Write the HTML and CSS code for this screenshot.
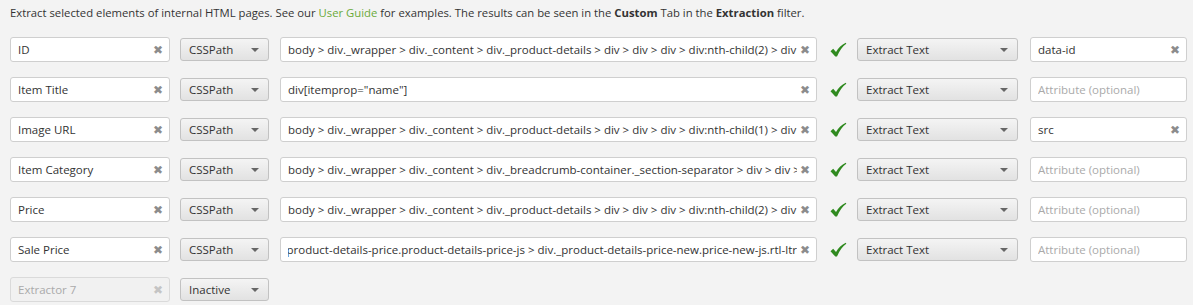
FILE: index.html
```html
<!DOCTYPE html>
<html>
<head>
<meta charset="utf-8">
<link rel="stylesheet" href="styles.css">
</head>
<body>
<div class="page">
  <p class="intro">Extract selected elements of internal HTML pages. See our <a class="link">User Guide</a> for examples. The results can be seen in the <b>Custom</b> Tab in the <b>Extraction</b> filter.</p>
  <div class="rows">
    <div class="row">
      <div class="field name"><span class="val">ID</span><span class="clear">✖</span></div>
      <div class="select type"><span>CSSPath</span><span class="caret"></span></div>
      <div class="field path"><span class="val">body &gt; div._wrapper &gt; div._content &gt; div._product-details &gt; div &gt; div &gt; div &gt; div:nth-child(2) &gt; div</span><span class="clear">✖</span></div>
      <div class="check"><svg width="18" height="16" viewBox="0 0 18 16"><path d="M1.5 9.2 L4.2 6.8 L7 10 C9.5 6 12.5 2.8 16.8 0.8 L17.3 1.8 C13.4 4.6 10.5 8.7 8 14.6 L6.3 14.6 Z" fill="#2f8a1f"/></svg></div>
      <div class="select action"><span>Extract Text</span><span class="caret"></span></div>
      <div class="field attr"><span class="val">data-id</span><span class="clear">✖</span></div>
    </div>
    <div class="row">
      <div class="field name"><span class="val">Item Title</span><span class="clear">✖</span></div>
      <div class="select type"><span>CSSPath</span><span class="caret"></span></div>
      <div class="field path"><span class="val">div[itemprop="name"]</span><span class="clear">✖</span></div>
      <div class="check"><svg width="18" height="16" viewBox="0 0 18 16"><path d="M1.5 9.2 L4.2 6.8 L7 10 C9.5 6 12.5 2.8 16.8 0.8 L17.3 1.8 C13.4 4.6 10.5 8.7 8 14.6 L6.3 14.6 Z" fill="#2f8a1f"/></svg></div>
      <div class="select action"><span>Extract Text</span><span class="caret"></span></div>
      <div class="field attr"><span class="val ph">Attribute (optional)</span></div>
    </div>
    <div class="row">
      <div class="field name"><span class="val">Image URL</span><span class="clear">✖</span></div>
      <div class="select type"><span>CSSPath</span><span class="caret"></span></div>
      <div class="field path"><span class="val">body &gt; div._wrapper &gt; div._content &gt; div._product-details &gt; div &gt; div &gt; div &gt; div:nth-child(1) &gt; div</span><span class="clear">✖</span></div>
      <div class="check"><svg width="18" height="16" viewBox="0 0 18 16"><path d="M1.5 9.2 L4.2 6.8 L7 10 C9.5 6 12.5 2.8 16.8 0.8 L17.3 1.8 C13.4 4.6 10.5 8.7 8 14.6 L6.3 14.6 Z" fill="#2f8a1f"/></svg></div>
      <div class="select action"><span>Extract Text</span><span class="caret"></span></div>
      <div class="field attr"><span class="val">src</span><span class="clear">✖</span></div>
    </div>
    <div class="row">
      <div class="field name"><span class="val">Item Category</span><span class="clear">✖</span></div>
      <div class="select type"><span>CSSPath</span><span class="caret"></span></div>
      <div class="field path"><span class="val">body &gt; div._wrapper &gt; div._content &gt; div._breadcrumb-container._section-separator &gt; div &gt; div &gt; div</span><span class="clear">✖</span></div>
      <div class="check"><svg width="18" height="16" viewBox="0 0 18 16"><path d="M1.5 9.2 L4.2 6.8 L7 10 C9.5 6 12.5 2.8 16.8 0.8 L17.3 1.8 C13.4 4.6 10.5 8.7 8 14.6 L6.3 14.6 Z" fill="#2f8a1f"/></svg></div>
      <div class="select action"><span>Extract Text</span><span class="caret"></span></div>
      <div class="field attr"><span class="val ph">Attribute (optional)</span></div>
    </div>
    <div class="row">
      <div class="field name"><span class="val">Price</span><span class="clear">✖</span></div>
      <div class="select type"><span>CSSPath</span><span class="caret"></span></div>
      <div class="field path"><span class="val">body &gt; div._wrapper &gt; div._content &gt; div._product-details &gt; div &gt; div &gt; div &gt; div:nth-child(2) &gt; div</span><span class="clear">✖</span></div>
      <div class="check"><svg width="18" height="16" viewBox="0 0 18 16"><path d="M1.5 9.2 L4.2 6.8 L7 10 C9.5 6 12.5 2.8 16.8 0.8 L17.3 1.8 C13.4 4.6 10.5 8.7 8 14.6 L6.3 14.6 Z" fill="#2f8a1f"/></svg></div>
      <div class="select action"><span>Extract Text</span><span class="caret"></span></div>
      <div class="field attr"><span class="val ph">Attribute (optional)</span></div>
    </div>
    <div class="row">
      <div class="field name"><span class="val">Sale Price</span><span class="clear">✖</span></div>
      <div class="select type"><span>CSSPath</span><span class="caret"></span></div>
      <div class="field path"><span class="val rtl">product-details-price.product-details-price-js &gt; div._product-details-price-new.price-new-js.rtl-ltr</span><span class="clear">✖</span></div>
      <div class="check"><svg width="18" height="16" viewBox="0 0 18 16"><path d="M1.5 9.2 L4.2 6.8 L7 10 C9.5 6 12.5 2.8 16.8 0.8 L17.3 1.8 C13.4 4.6 10.5 8.7 8 14.6 L6.3 14.6 Z" fill="#2f8a1f"/></svg></div>
      <div class="select action"><span>Extract Text</span><span class="caret"></span></div>
      <div class="field attr"><span class="val ph">Attribute (optional)</span></div>
    </div>
    <div class="row">
      <div class="field name disabled"><span class="val">Extractor 7</span><span class="clear">✖</span></div>
      <div class="select type"><span>Inactive</span><span class="caret"></span></div>
    </div>
  </div>
</div>
</body>
</html>
```
FILE: styles.css
```css
* { box-sizing: border-box; }
html, body { margin: 0; padding: 0; }
body {
  background: #f3f3f3;
  font-family: "Open Sans", "Noto Sans", sans-serif;
  font-size: 11.5px;
  color: #333;
  width: 1193px;
  height: 305px;
  overflow: hidden;
}
.page { padding: 5px 0 0 10px; }
.intro {
  margin: 0;
  line-height: 16px;
  height: 16px;
  color: #333;
  font-size: 11.3px;
}
.intro b { font-weight: 700; }
.link { color: #6aaa3a; text-decoration: none; }
.rows {
  margin-top: 16px;
  display: flex;
  flex-direction: column;
  gap: 15px;
}
.row {
  display: flex;
  align-items: center;
  height: 25px;
}
.field {
  height: 25px;
  background: #fff;
  border: 1px solid #cfcfcf;
  border-radius: 3px;
  display: flex;
  align-items: center;
  padding: 0 6px 0 7px;
  overflow: hidden;
}
.val {
  flex: 1;
  white-space: nowrap;
  overflow: hidden;
  min-width: 0;
}
.val.rtl { direction: rtl; text-align: left; }
.ph { color: #aaa; }
.clear {
  color: #8c8c8c;
  font-family: "DejaVu Sans", sans-serif;
  font-size: 12px;
  margin-left: 3px;
  line-height: 1;
}
.name { width: 160px; }
.name.disabled { background: #f1f1f1; border-color: #dadada; color: #aaa; }
.name.disabled .clear { color: #c4c4c4; }
.select {
  height: 23px;
  border: 1px solid #c2c2c2;
  border-radius: 3px;
  background: linear-gradient(#f4f4f4, #e2e2e2);
  display: flex;
  align-items: center;
  justify-content: space-between;
  padding: 0 9px 0 8px;
  color: #333;
}
.caret {
  width: 0; height: 0;
  border-left: 4px solid transparent;
  border-right: 4px solid transparent;
  border-top: 4px solid #666;
}
.type { width: 89px; margin-left: 10px; }
.path { width: 537px; margin-left: 11px; }
.check {
  width: 40px;
  display: flex;
  justify-content: center;
  align-items: center;
  padding-left: 2px;
}
.action { width: 161px; }
.attr { width: 157px; margin-left: 12px; }
```
